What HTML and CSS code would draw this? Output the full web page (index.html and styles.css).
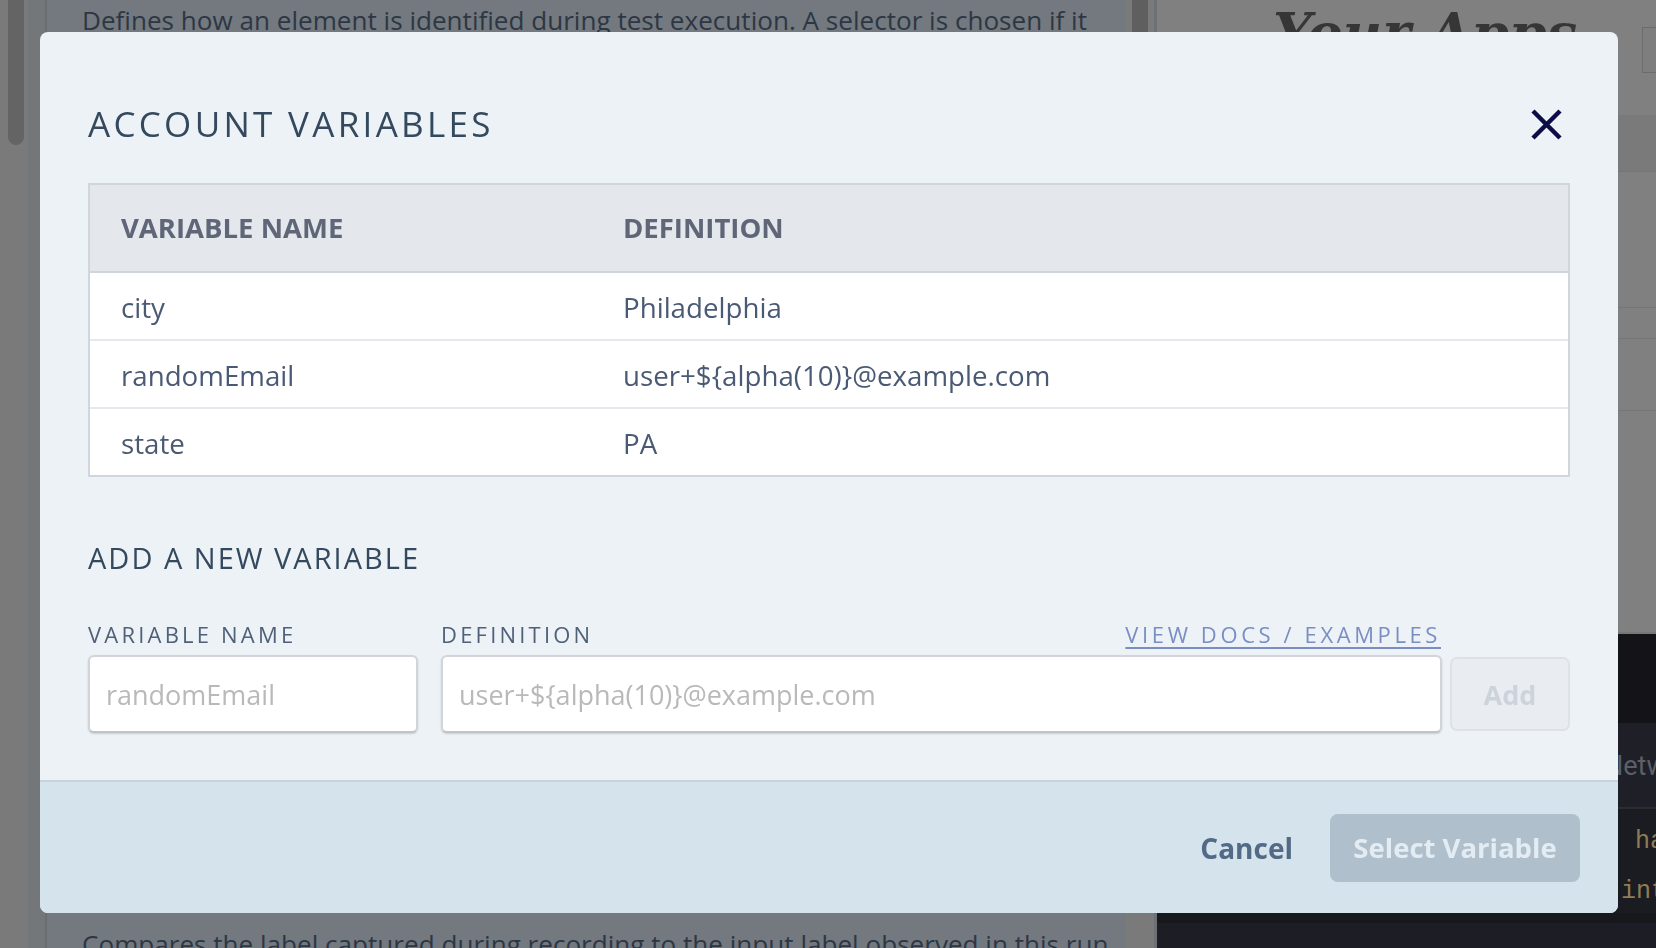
FILE: index.html
```html
<!DOCTYPE html>
<html lang="en">
<head>
    <meta charset="UTF-8">
    <meta name="viewport" content="width=device-width, initial-scale=1.0">
    <title>Account Variables</title>
    <link rel="stylesheet" href="styles.css">
</head>
<body>
    <div class="page">
        <div class="rail"><div class="rail-thumb"></div></div>
        <div class="gutter"></div>
        <main class="main">
            <p class="hint hint-top">Defines how an element is identified during test execution. A selector is chosen if it</p>
            <p class="hint hint-bottom">Compares the label captured during recording to the input label observed in this run</p>
        </main>
        <div class="track"><div class="track-thumb"></div></div>
        <aside class="side">
            <div class="side-head">
                <div class="logo">Your Apps</div>
                <div class="side-box"></div>
            </div>
            <div class="side-band"></div>
            <div class="side-row side-row-a"></div>
            <div class="side-row side-row-b"></div>
            <div class="side-row side-row-c"></div>
            <div class="side-rest"></div>
            <div class="console">
                <div class="console-bar"></div>
                <div class="console-tabs"><span class="console-tab">Network</span></div>
                <div class="console-code">
                    <div class="code-line code-indent">handleSelect(variable)</div>
                    <div class="code-line">interface Variable {</div>
                </div>
                <div class="console-foot"></div>
            </div>
        </aside>
    </div>

    <div class="modal">
        <div class="modal-body">
            <div class="modal-head">
                <h2 class="modal-title">Account Variables</h2>
                <button class="close-btn" type="button" aria-label="Close">
                    <svg width="31" height="31" viewBox="0 0 31 31">
                        <path d="M2 2L29 29M29 2L2 29" stroke="#0d0c47" stroke-width="4.5" fill="none"/>
                    </svg>
                </button>
            </div>

            <table class="vars-table">
                <thead>
                    <tr><th class="col-name">Variable Name</th><th>Definition</th></tr>
                </thead>
                <tbody>
                    <tr><td>city</td><td>Philadelphia</td></tr>
                    <tr><td>randomEmail</td><td>user+${alpha(10)}@example.com</td></tr>
                    <tr><td>state</td><td>PA</td></tr>
                </tbody>
            </table>

            <h3 class="section-title">Add a New Variable</h3>
            <div class="field-labels">
                <label class="field-label name-col" for="varName">Variable Name</label>
                <div class="def-col def-labels">
                    <label class="field-label" for="varDef">Definition</label>
                    <a class="docs-link" href="#">View Docs / Examples</a>
                </div>
            </div>
            <div class="field-row">
                <input class="text-input name-col" id="varName" type="text" placeholder="randomEmail">
                <input class="text-input def-col" id="varDef" type="text" placeholder="user+${alpha(10)}@example.com">
                <button class="add-btn" type="button" disabled>Add</button>
            </div>
        </div>
        <div class="modal-foot">
            <button class="cancel-btn" type="button">Cancel</button>
            <button class="select-btn" type="button" disabled>Select Variable</button>
        </div>
    </div>
</body>
</html>
```

FILE: styles.css
```css
body {
    margin: 0;
    font-family: "Open Sans", Arial, sans-serif;
    overflow: hidden;
    background-color: #7a7a7a;
}

/* page behind the dialog, already dimmed */
.page {
    display: flex;
    height: 948px;
    overflow: hidden;
}
.rail {
    width: 28px;
    background-color: #7a7a7a;
}
.rail-thumb {
    width: 16px;
    height: 145px;
    margin-left: 8px;
    background-color: #646464;
    border-radius: 0 0 8px 8px;
}
.gutter {
    width: 17px;
    background-color: #74777a;
    border-right: 2px solid #6b6e71;
}
.main {
    width: 1078px;
    background-color: #73797f;
    padding: 5px 0 0 35px;
    box-sizing: border-box;
    overflow: hidden;
}
.hint {
    margin: 0;
    font-family: "Open Sans", Arial, sans-serif;
    font-size: 26.1px;
    line-height: 30px;
    color: #2d3744;
    white-space: nowrap;
}
.hint-bottom {
    margin-top: 894px;
}
.track {
    width: 29px;
    background-color: #7a7a7a;
}
.track-thumb {
    width: 16px;
    height: 200px;
    margin-left: 7px;
    background-color: #5f5f5f;
    border-radius: 0 0 8px 8px;
}
.side {
    flex: 1;
    display: flex;
    flex-direction: column;
    background-color: #808080;
    border-left: 3px solid #6d7175;
    overflow: hidden;
}
.side-head {
    display: flex;
    height: 115px;
    padding-left: 116px;
    overflow: hidden;
}
.logo {
    width: 369px;
    flex-shrink: 0;
    font-family: "DejaVu Serif", serif;
    font-style: italic;
    font-weight: bold;
    font-size: 54px;
    line-height: 1;
    margin-top: 6px;
    color: #363636;
    white-space: nowrap;
    overflow: hidden;
}
.side-box {
    flex-shrink: 0;
    width: 80px;
    height: 44px;
    margin-top: 27px;
    border: 1px solid #6c6c6c;
    background-color: #7e7e7e;
}
.side-band {
    height: 56px;
    background-color: #7a7a7a;
    border-bottom: 1px solid #767676;
}
.side-row {
    border-bottom: 1px solid #767676;
}
.side-row-a { height: 135px; }
.side-row-b { height: 30px; }
.side-row-c { height: 71px; }
.side-rest {
    height: 221px;
    border-bottom: 2px solid #777;
}
.console {
    flex: 1;
    background-color: #1c1d25;
}
.console-bar {
    height: 89px;
    background-color: #131318;
}
.console-tabs {
    height: 86px;
    background-color: #1f2027;
    border-bottom: 2px solid #2b2c34;
    padding-left: 447px;
    box-sizing: border-box;
}
.console-tab {
    font-family: Roboto, Arial, sans-serif;
    font-size: 27px;
    line-height: 86px;
    color: #5b5f69;
    white-space: nowrap;
}
.console-code {
    height: 104px;
    background-color: #1b1c22;
    padding: 8px 0 0 464px;
    box-sizing: border-box;
}
.code-line {
    font-family: "Liberation Mono", "DejaVu Sans Mono", monospace;
    font-size: 25px;
    line-height: 50px;
    color: #8e7d55;
    white-space: nowrap;
}
.code-indent {
    padding-left: 14px;
}
.console-foot {
    height: 10px;
    background-color: #17181c;
}

/* dialog */
.modal {
    position: fixed;
    top: 32px;
    left: 40px;
    width: 1578px;
    background-color: #edf2f7;
    border-radius: 8px;
    overflow: hidden;
}
.modal-body {
    padding: 70px 48px 47px;
}
.modal-head {
    display: flex;
    justify-content: space-between;
    align-items: center;
    height: 44px;
}
.modal-title {
    margin: 0;
    font-size: 35px;
    line-height: 44px;
    font-weight: normal;
    letter-spacing: 3.3px;
    text-transform: uppercase;
    color: #34495e;
}
.close-btn {
    border: none;
    background: none;
    padding: 0;
    margin-right: 8px;
    width: 31px;
    height: 31px;
    cursor: pointer;
}
.close-btn svg {
    display: block;
}

.vars-table {
    width: 100%;
    margin-top: 37px;
    border-spacing: 0;
    border: 2px solid #d0d6dd;
    background-color: white;
}
.vars-table th,
.vars-table td {
    text-align: left;
    padding: 0 31px;
    white-space: nowrap;
}
.vars-table th {
    background-color: #e4e7eb;
    line-height: 86px;
    font-size: 27.5px;
    font-weight: bold;
    text-transform: uppercase;
    color: #5f6678;
    border-bottom: 2px solid #d0d5db;
}
.vars-table .col-name {
    width: 440px;
}
.vars-table td {
    padding-top: 3px;
    line-height: 63px;
    font-size: 27.7px;
    color: #4a5a74;
    border-bottom: 2px solid #e5e8ec;
}
.vars-table tr:last-child td {
    border-bottom: none;
}

.section-title {
    margin: 63px 0 0;
    font-size: 29px;
    line-height: 36px;
    font-weight: normal;
    letter-spacing: 2px;
    text-transform: uppercase;
    color: #34495e;
}
.field-labels {
    display: flex;
    margin-top: 45px;
    padding-right: 129px;
}
.field-label {
    font-size: 22px;
    line-height: 26px;
    letter-spacing: 3.2px;
    text-transform: uppercase;
    color: #4f6179;
}
.name-col {
    width: 330px;
    margin-right: 23px;
    flex-shrink: 0;
}
.def-col {
    flex: 1;
}
.def-labels {
    display: flex;
    justify-content: space-between;
}
.docs-link {
    font-size: 22px;
    line-height: 26px;
    letter-spacing: 3.6px;
    text-transform: uppercase;
    color: #7a8ec4;
    text-decoration: underline;
    text-underline-offset: 4px;
    text-decoration-thickness: 2px;
}
.field-row {
    display: flex;
    align-items: center;
    margin-top: 8px;
}
.text-input {
    box-sizing: border-box;
    height: 78px;
    padding: 0 16px;
    font-family: "Open Sans", Arial, sans-serif;
    font-size: 27px;
    color: #4a5a74;
    background-color: white;
    border: 2px solid #d1d5da;
    border-bottom-color: #c0c4c9;
    border-radius: 6px;
    box-shadow: 0 1px 2px rgba(0, 0, 0, 0.16);
    outline: none;
}
.text-input::placeholder {
    color: #b9b9b9;
}
.add-btn {
    width: 120px;
    height: 74px;
    margin-left: 8px;
    flex-shrink: 0;
    font-family: "Open Sans", Arial, sans-serif;
    font-size: 27px;
    font-weight: bold;
    color: #cdd3db;
    background-color: #e9edf2;
    border: 2px solid #dee2e8;
    border-radius: 7px;
}

.modal-foot {
    display: flex;
    justify-content: flex-end;
    align-items: center;
    gap: 37px;
    height: 131px;
    padding-right: 38px;
    background-color: #d5e3ec;
    border-top: 2px solid #c9d3dc;
}
.cancel-btn {
    border: none;
    background: none;
    padding: 0;
    font-family: "Open Sans", Arial, sans-serif;
    font-size: 28px;
    font-weight: bold;
    color: #536a86;
    cursor: pointer;
}
.select-btn {
    width: 250px;
    height: 68px;
    border: none;
    border-radius: 8px;
    background-color: #b0bfcc;
    font-family: "Open Sans", Arial, sans-serif;
    font-size: 27.5px;
    font-weight: bold;
    color: #e4ecf3;
}
```
